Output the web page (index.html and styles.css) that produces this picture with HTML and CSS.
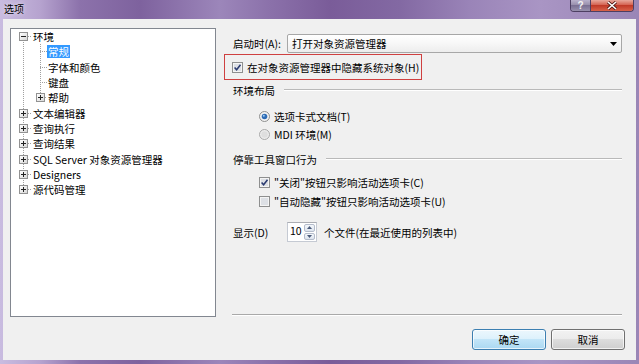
FILE: index.html
```html
<!DOCTYPE html>
<html lang="zh-CN">
<head>
    <meta charset="UTF-8">
    <meta name="viewport" content="width=device-width, initial-scale=1.0">
    <title>选项</title>
    <link rel="stylesheet" href="styles.css">
</head>
<body>

<div class="window">
    <div class="titlebar">
        <span class="title">选项</span>
        <div class="caption-btns">
            <span class="cap-help">?</span>
            <span class="cap-close">
                <svg width="12" height="9" viewBox="0 0 12 9"><path d="M2 1l8 7M10 1L2 8" stroke="#4a1410" stroke-width="3"/><path d="M2 1l8 7M10 1L2 8" stroke="#fff" stroke-width="1.6"/></svg>
            </span>
        </div>
    </div>

    <div class="client">
        <div class="main">
            <!-- Chap tomondagi daraxt -->
            <div class="tree">
                <ul class="root">
                    <li>
                        <div class="node"><span class="exp minus"></span><span class="hl"></span><span class="label">环境</span></div>
                        <ul class="sub">
                            <li class="node leaf"><span class="hl"></span><span class="label sel">常规</span></li>
                            <li class="node leaf"><span class="hl"></span><span class="label">字体和颜色</span></li>
                            <li class="node leaf"><span class="hl"></span><span class="label">键盘</span></li>
                            <li class="node branch"><span class="exp"></span><span class="hl"></span><span class="label">帮助</span></li>
                        </ul>
                    </li>
                    <li class="node"><span class="exp"></span><span class="hl"></span><span class="label">文本编辑器</span></li>
                    <li class="node"><span class="exp"></span><span class="hl"></span><span class="label">查询执行</span></li>
                    <li class="node"><span class="exp"></span><span class="hl"></span><span class="label">查询结果</span></li>
                    <li class="node"><span class="exp"></span><span class="hl"></span><span class="label">SQL Server 对象资源管理器</span></li>
                    <li class="node"><span class="exp"></span><span class="hl"></span><span class="label">Designers</span></li>
                    <li class="node"><span class="exp"></span><span class="hl"></span><span class="label">源代码管理</span></li>
                </ul>
            </div>

            <!-- O'ng panel -->
            <div class="panel">
                <div class="row-start">
                    <span class="field-label">启动时(A):</span>
                    <div class="combo">
                        <span>打开对象资源管理器</span>
                        <svg width="7" height="4" viewBox="0 0 7 4"><path d="M0 0h7L3.5 4z" fill="#000"/></svg>
                    </div>
                </div>

                <div class="redbox">
                    <svg class="cb" width="11" height="11" viewBox="0 0 11 11"><rect x="0.5" y="0.5" width="10" height="10" fill="#f4f4f4" stroke="#8e8f8f"/><rect x="2" y="2" width="7" height="7" fill="#dde0e5"/><path d="M2.6 5.4l2 2.3 3.9-5" fill="none" stroke="#2a3a70" stroke-width="1.5"/></svg>
                    <span>在对象资源管理器中隐藏系统对象(H)</span>
                </div>

                <div class="group-head first"><span>环境布局</span><span class="etch"></span></div>
                <div class="opts radios">
                    <div class="opt">
                        <svg class="rb" width="11" height="11" viewBox="0 0 11 11"><circle cx="5.5" cy="5.5" r="5" fill="#f2f2f2" stroke="#8e8f8f"/><circle cx="5.5" cy="5.5" r="2.8" fill="#2d6bb5"/><circle cx="4.8" cy="4.7" r="1" fill="#9ccaf2"/></svg>
                        <span>选项卡式文档(T)</span>
                    </div>
                    <div class="opt">
                        <svg class="rb" width="11" height="11" viewBox="0 0 11 11"><circle cx="5.5" cy="5.5" r="5" fill="#ececec" stroke="#a9a9a9"/><circle cx="5.5" cy="5.5" r="3.2" fill="#dedede"/></svg>
                        <span>MDI 环境(M)</span>
                    </div>
                </div>

                <div class="group-head"><span>停靠工具窗口行为</span><span class="etch"></span></div>
                <div class="opts checks">
                    <div class="opt">
                        <svg class="cb" width="11" height="11" viewBox="0 0 11 11"><rect x="0.5" y="0.5" width="10" height="10" fill="#f4f4f4" stroke="#8e8f8f"/><rect x="2" y="2" width="7" height="7" fill="#dde0e5"/><path d="M2.6 5.4l2 2.3 3.9-5" fill="none" stroke="#2a3a70" stroke-width="1.5"/></svg>
                        <span>"关闭"按钮只影响活动选项卡(C)</span>
                    </div>
                    <div class="opt">
                        <svg class="cb" width="11" height="11" viewBox="0 0 11 11"><rect x="0.5" y="0.5" width="10" height="10" fill="#f4f4f4" stroke="#8e8f8f"/><rect x="2" y="2" width="7" height="7" fill="#dde0e5"/></svg>
                        <span>"自动隐藏"按钮只影响活动选项卡(U)</span>
                    </div>
                </div>

                <div class="row-spin">
                    <span class="field-label">显示(D)</span>
                    <div class="spin">
                        <span class="spin-val">10</span>
                        <div class="spin-btns">
                            <span class="spin-up"><svg width="5" height="3" viewBox="0 0 5 3"><path d="M0 3h5L2.5 0z" fill="#4a5a7a"/></svg></span>
                            <span class="spin-down"><svg width="5" height="3" viewBox="0 0 5 3"><path d="M0 0h5L2.5 3z" fill="#4a5a7a"/></svg></span>
                        </div>
                    </div>
                    <span class="spin-after">个文件(在最近使用的列表中)</span>
                </div>

                <div class="separator"></div>
            </div>
        </div>

        <div class="buttons">
            <button class="btn default">确定</button>
            <button class="btn">取消</button>
        </div>
    </div>
</div>

</body>
</html>
```

FILE: styles.css
```css
/* Umumiy */
* {
    box-sizing: border-box;
}
body {
    margin: 0;
    font-family: "Noto Sans CJK SC", "Noto Sans", sans-serif;
    font-size: 10.5px;
    color: #000;
}
.window {
    width: 639px;
    height: 364px;
    overflow: hidden;
    background: linear-gradient(to right, #c9bce0 0, #b6a3cf 40px, #8c72ab 80px, #7e629e 140px, #9c86ba 220px, #8b71aa 270px, #7a5c99 330px, #8369a3 400px, #9a84b8 470px, #a995c4 540px, #9a86b6 639px);
}

/* Sarlavha qatori */
.titlebar {
    height: 19px;
    display: flex;
    align-items: flex-start;
    padding-left: 4px;
}
.title {
    font-size: 10px;
    line-height: 18px;
    text-shadow: 0 0 4px rgba(255, 255, 255, 0.8);
}
.caption-btns {
    margin-left: auto;
    margin-right: 5px;
    display: flex;
    height: 12px;
    border: 1px solid #4d3f62;
    border-top: none;
    border-radius: 0 0 4px 4px;
    overflow: hidden;
}
.cap-help {
    width: 20px;
    display: flex;
    justify-content: center;
    align-items: center;
    background: linear-gradient(#b9b1cc, #948ba8 50%, #7a7093 50%, #9890ae);
    color: #f4f4f4;
    font-family: "Liberation Sans", sans-serif;
    font-size: 10px;
    font-weight: bold;
    line-height: 11px;
    border-right: 1px solid #4d3f62;
}
.cap-close {
    width: 42px;
    display: flex;
    justify-content: center;
    align-items: center;
    background: linear-gradient(#e8a89c, #d25a48 50%, #c03a28 50%, #d9624a);
}

/* Asosiy maydon */
.client {
    margin: 0 3px;
    height: 341px;
    background-color: #f0f0f0;
    padding: 9px 11px 0 7px;
}
.main {
    display: flex;
    height: 289px;
}

/* Daraxt */
.tree {
    width: 206px;
    height: 289px;
    background-color: #fff;
    border: 1px solid #828790;
}
.tree ul {
    list-style: none;
    margin: 0;
    padding: 0;
}
.root {
    background: repeating-linear-gradient(to bottom, #a0a0a0 0 1px, transparent 1px 2px) 12px 9px / 1px calc(100% - 17px) no-repeat;
}
.sub {
    background: repeating-linear-gradient(to bottom, #a0a0a0 0 1px, transparent 1px 2px) 29px 0 / 1px calc(100% - 7px) no-repeat;
}
.node {
    display: flex;
    align-items: center;
    height: 15.3px;
    padding-left: 8px;
}
.node.leaf {
    padding-left: 29px;
}
.node.branch {
    padding-left: 25px;
}
.exp {
    flex: none;
    width: 9px;
    height: 9px;
    border: 1px solid #929292;
    background:
        linear-gradient(#222, #222) center / 5px 1px no-repeat,
        linear-gradient(#222, #222) center / 1px 5px no-repeat,
        linear-gradient(135deg, #ffffff, #d8d8d8);
}
.exp.minus {
    background:
        linear-gradient(#222, #222) center / 5px 1px no-repeat,
        linear-gradient(135deg, #ffffff, #d8d8d8);
}
.hl {
    flex: none;
    width: 4px;
    height: 1px;
    background: repeating-linear-gradient(to right, #a0a0a0 0 1px, transparent 1px 2px);
}
.leaf .hl {
    width: 7px;
}
.branch .hl {
    width: 2px;
}
.label {
    padding: 0 1px;
    line-height: 13px;
    white-space: nowrap;
}
.label.sel {
    background-color: #3399ff;
    color: #fff;
}

/* O'ng panel */
.panel {
    width: 398px;
    margin-left: 8px;
    display: flex;
    flex-direction: column;
}
.row-start {
    display: flex;
    align-items: center;
    height: 19px;
    margin-top: 6px;
    padding-left: 9px;
}
.field-label {
    width: 54px;
    flex: none;
}
.combo {
    flex: 1;
    height: 19px;
    display: flex;
    align-items: center;
    justify-content: space-between;
    padding: 0 4px 0 4px;
    border: 1px solid #a7a7a7;
    border-radius: 2px;
    background: linear-gradient(#ffffff, #f7f7f7 50%, #ededed);
}
.redbox {
    width: 198px;
    height: 26px;
    margin-top: 1px;
    border: 1px solid #cf4040;
    display: flex;
    align-items: center;
    padding-left: 7px;
    gap: 4px;
}
.cb, .rb {
    flex: none;
}
.group-head {
    display: flex;
    align-items: center;
    height: 14px;
    margin-top: 9px;
    padding-left: 9px;
}
.group-head.first {
    margin-top: 3px;
}
.etch {
    flex: 1;
    margin-left: 9px;
    border-top: 1px solid #b9b9b9;
    border-bottom: 1px solid #ffffff;
}
.opts {
    padding-left: 35px;
}
.radios {
    margin-top: 10px;
}
.radios .opt {
    height: 18px;
}
.checks {
    margin-top: 7px;
}
.checks .opt {
    height: 19px;
}
.opt {
    display: flex;
    align-items: center;
    gap: 4px;
}
.row-spin {
    display: flex;
    align-items: center;
    height: 20px;
    margin-top: 11px;
    padding-left: 9px;
}
.spin {
    width: 30px;
    height: 20px;
    display: flex;
    background-color: #fff;
    border: 1px solid #c5cad3;
    border-top-color: #abadb3;
}
.spin-val {
    flex: 1;
    padding-left: 2px;
    line-height: 16px;
}
.spin-btns {
    width: 12px;
    display: flex;
    flex-direction: column;
    padding: 1px 1px 1px 0;
    gap: 1px;
}
.spin-btns span {
    flex: 1;
    display: flex;
    align-items: center;
    justify-content: center;
    border: 1px solid #b4bccb;
    border-radius: 2px;
    background: linear-gradient(#f4f7fb, #dde4ee);
}
.spin-after {
    margin-left: 7px;
}
.separator {
    margin-top: auto;
    margin-left: 8px;
    margin-bottom: 1px;
    border-top: 1px solid #a9a9a9;
    border-bottom: 1px solid #ffffff;
}

/* Tugmalar */
.buttons {
    display: flex;
    justify-content: flex-end;
    gap: 5px;
    margin-top: 12px;
}
.btn {
    width: 74px;
    height: 21px;
    padding: 0;
    font-family: inherit;
    font-size: 10.5px;
    color: #000;
    border: 1px solid #707070;
    border-radius: 3px;
    background: linear-gradient(#f2f2f2, #ebebeb 50%, #dddddd 50%, #cfcfcf);
    box-shadow: inset 0 0 0 1px rgba(255, 255, 255, 0.7);
}
.btn.default {
    border-color: #3c7fb1;
    background: linear-gradient(#ecf7fd, #dcf1fc 50%, #c2e5f8 50%, #aad8f2);
}
```
